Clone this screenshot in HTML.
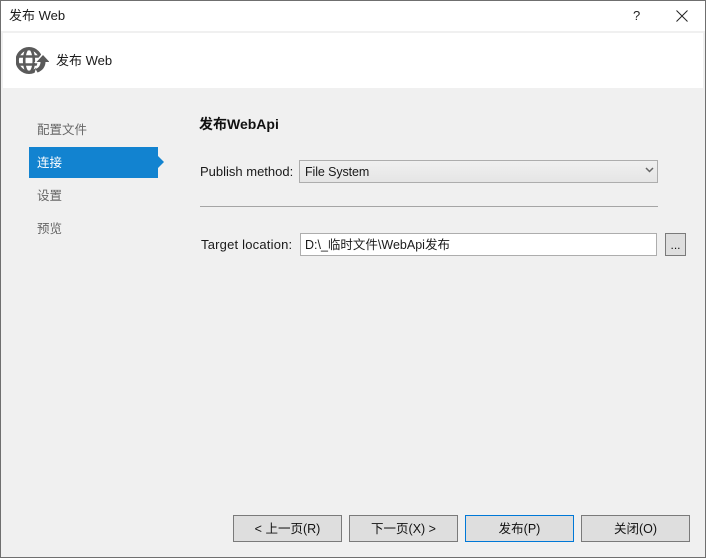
<!DOCTYPE html>
<html lang="zh">
<head>
<meta charset="utf-8">
<title>发布 Web</title>
<style>
html,body{margin:0;padding:0;background:#f0f0f0}
body{width:706px;height:558px;position:relative;overflow:hidden;font-family:"Liberation Sans","Noto Sans CJK SC",sans-serif;font-size:13px;color:#1a1a1a}
.a{position:absolute;box-sizing:border-box;white-space:nowrap}
.t{line-height:18px}
.btn{background:#dedede;border:1px solid #7a7a7a;height:27px;width:109px;top:515px;text-align:center;line-height:26px;font-size:12.5px;color:#111}
.nav{left:37px;color:#666;font-size:12.5px;line-height:18px}
</style>
</head>
<body>
<div class="a" style="left:0;top:0;width:706px;height:558px;border:1px solid #6f6f6f"></div>
<div class="a" style="left:1px;top:1px;width:704px;height:30px;background:#fff"></div>
<div class="a t" style="left:9px;top:7px">发布 Web</div>
<div class="a" style="left:633px;top:7px;font-size:13px;line-height:18px;color:#222">?</div>
<svg class="a" style="left:675px;top:9px" width="14" height="14" viewBox="0 0 14 14"><path d="M1.500 1.500L12.500 12.500M12.500 1.500L1.500 12.500" stroke="#222" stroke-width="1" fill="none"/></svg>

<div class="a" style="left:3px;top:33px;width:700px;height:55px;background:#fff"></div>
<svg class="a" style="left:16px;top:46px" width="33" height="29" viewBox="0 0 33 29">
<circle cx="13" cy="14.500" r="11.800" fill="none" stroke="#5a5a5a" stroke-width="3.400"/>
<ellipse cx="13" cy="14.500" rx="4.800" ry="12" fill="none" stroke="#5a5a5a" stroke-width="2.600"/>
<path d="M1 10.500H25M1 18.500H25" stroke="#5a5a5a" stroke-width="2.600" fill="none"/>
<path d="M27 6.500L36 17H18z" fill="#fff"/>
<path d="M22 15H32V20L24 29H18z" fill="#fff"/>
<path d="M27 9L33.500 16H29.500C29.500 21 26 25 21.500 26.500L19.500 23C22.500 22 24.500 19.500 24.500 16H20.500z" fill="#5a5a5a"/>
</svg>
<div class="a t" style="left:56px;top:52px">发布 Web</div>

<div class="a nav" style="top:121px">配置文件</div>
<div class="a" style="left:29px;top:147px;width:129px;height:31px;background:#1283d0"></div>
<svg class="a" style="left:158px;top:156px" width="6" height="12" viewBox="0 0 6 12"><path d="M0 0L6 6L0 12z" fill="#1283d0"/></svg>
<div class="a nav" style="top:154px;color:#fff">连接</div>
<div class="a nav" style="top:187px">设置</div>
<div class="a nav" style="top:220px">预览</div>

<div class="a t" style="left:199px;top:115px;font-size:14px;font-weight:bold;color:#111">发布WebApi</div>
<div class="a t" style="left:200px;top:163px">Publish method:</div>
<div class="a" style="left:299px;top:160px;width:359px;height:23px;border:1px solid #adadad;background:linear-gradient(#f0f0f0,#e5e5e5)"></div>
<div class="a t" style="left:305px;top:163px;font-size:12.500px;letter-spacing:-.1px">File System</div>
<svg class="a" style="left:645px;top:167px" width="9" height="6" viewBox="0 0 9 6"><path d="M1 1L4.500 4.500L8 1" stroke="#666" stroke-width="1.500" fill="none"/></svg>
<div class="a" style="left:200px;top:206px;width:458px;height:1px;background:#a5a5a5"></div>
<div class="a t" style="left:201px;top:236px;letter-spacing:.2px">Target location:</div>
<div class="a" style="left:300px;top:233px;width:357px;height:23px;border:1px solid #adadad;background:#fff"></div>
<div class="a t" style="left:305px;top:236px;font-size:12.500px">D:\_临时文件\WebApi发布</div>
<div class="a" style="left:665px;top:233px;width:21px;height:23px;border:1px solid #7a7a7a;background:#dedede;text-align:center;line-height:22px;font-size:12px;color:#111">...</div>

<div class="a btn" style="left:233px">&lt; 上一页(R)</div>
<div class="a btn" style="left:349px">下一页(X) &gt;</div>
<div class="a btn" style="left:465px;border-color:#0078d7">发布(P)</div>
<div class="a btn" style="left:581px">关闭(O)</div>
</body>
</html>
